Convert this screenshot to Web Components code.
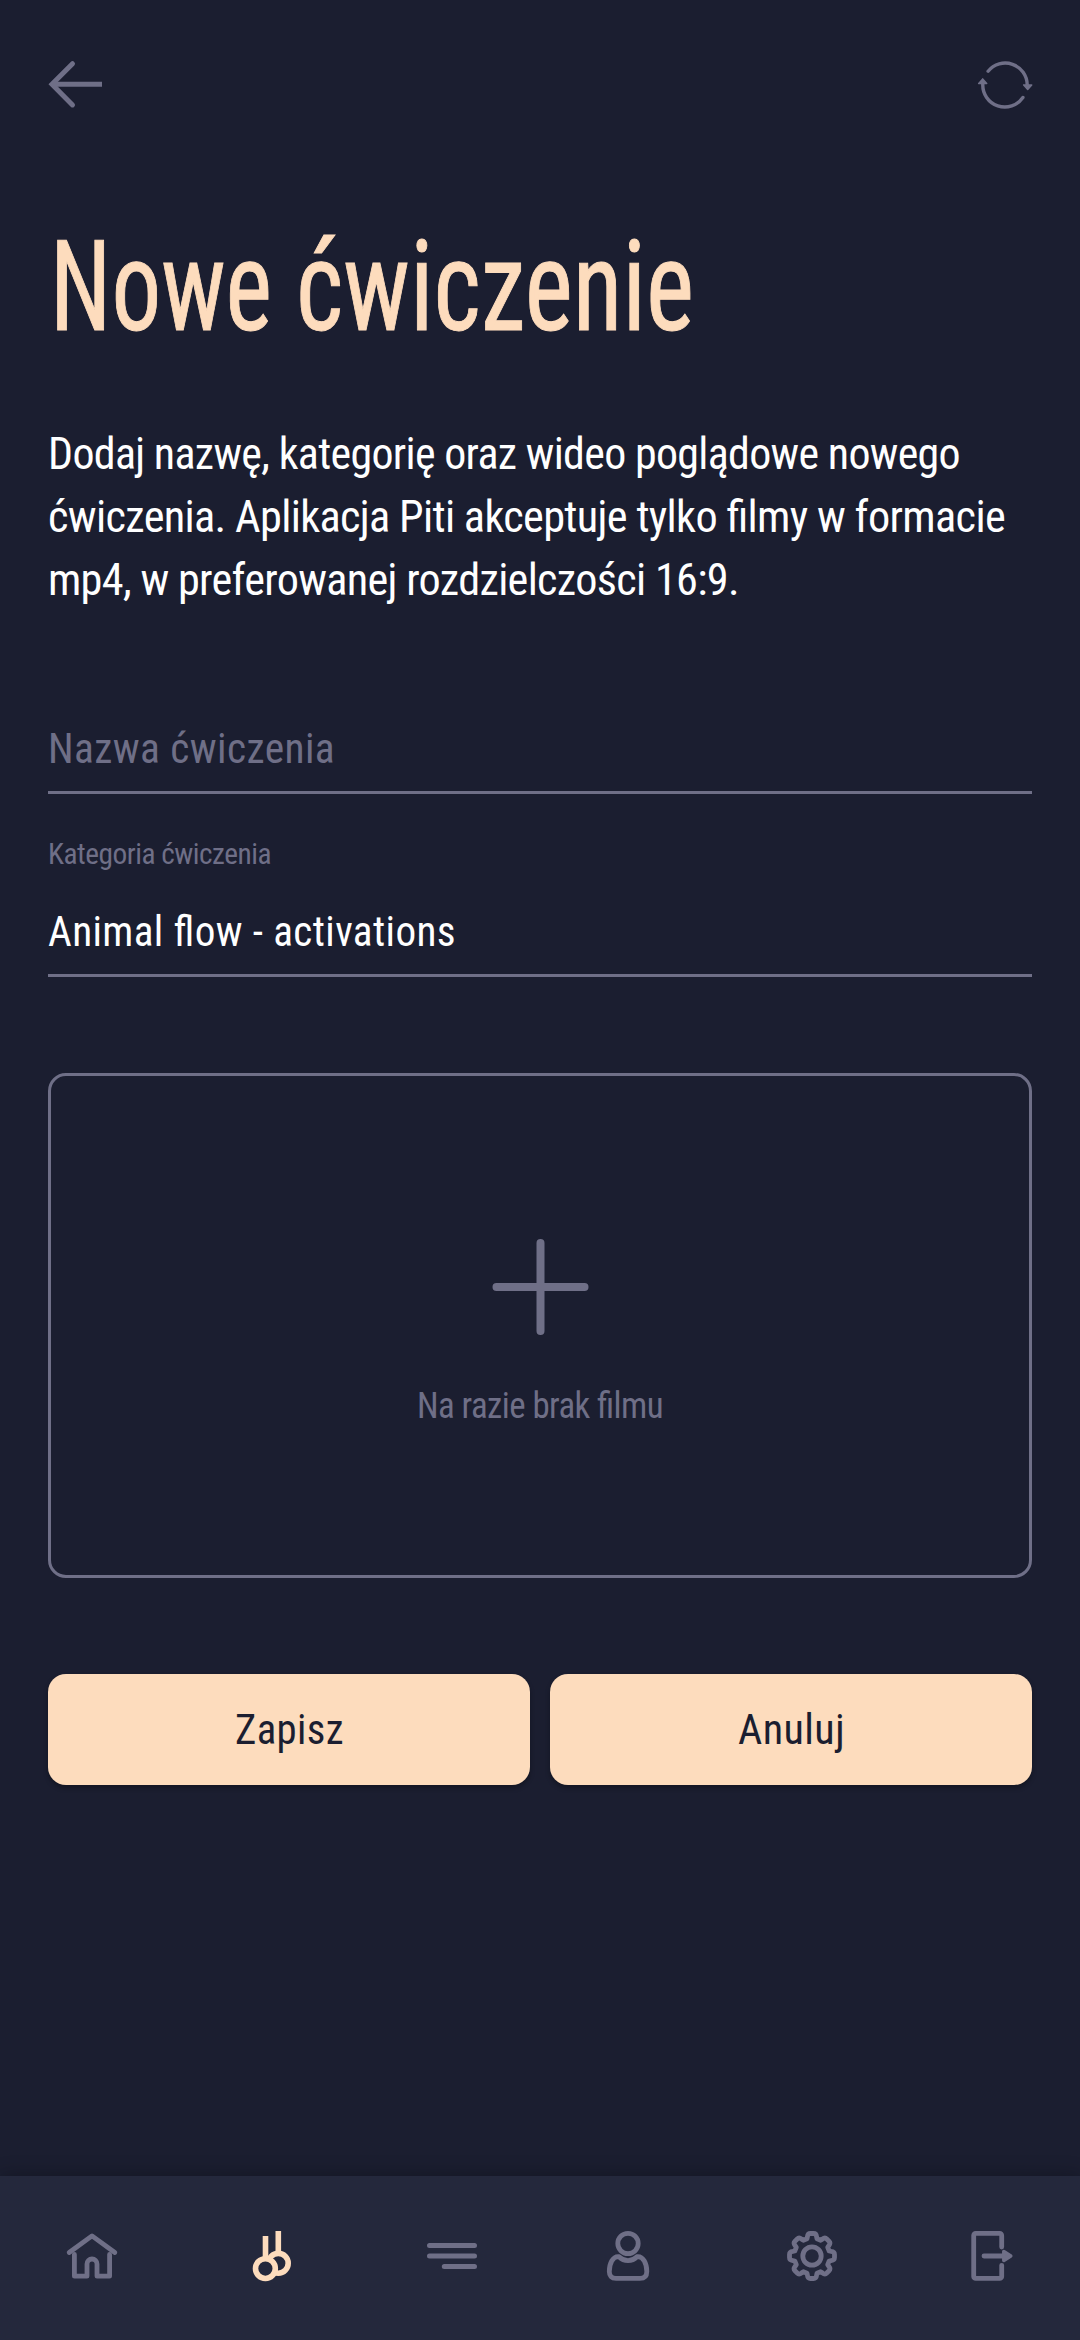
<!DOCTYPE html>
<html lang="pl">
<head>
<meta charset="utf-8">
<title>Nowe ćwiczenie</title>
<style>
html,body{margin:0;background:#1b1e30}
body{font-family:"Roboto Condensed",Roboto,sans-serif;font-stretch:75%;color:#fff}
</style>
</head>
<body>
<exercise-page></exercise-page>
<script>
function define(name, html, connected){
  customElements.define(name, class extends HTMLElement{
    constructor(){
      super();
      const t=document.createElement('template');
      t.innerHTML=html;
      this.attachShadow({mode:'open'}).appendChild(t.content.cloneNode(true));
    }
    connectedCallback(){ if(connected) connected.call(this); }
  });
}

// One tooth of the gear, repeated eight times round the centre
function gearPath(){
  const tooth=[[-5,-17.2],[-4.6,-19.2],[-4.2,-22.5],[-1.6,-22.5],[1.6,-22.5],[4.2,-22.5],[4.6,-19.2],[5,-17.2]];
  let d='';
  for(let k=0;k<8;k++){
    const a=k*Math.PI/4,c=Math.cos(a),s=Math.sin(a);
    const p=tooth.map(([x,y])=>(25+x*c-y*s).toFixed(2)+' '+(25+x*s+y*c).toFixed(2));
    d+=(k?'L':'M')+p[0]+'L'+p[1]+'Q'+p[2]+' '+p[3]+'L'+p[4]+'Q'+p[5]+' '+p[6]+'L'+p[7];
  }
  return d+'Z';
}
const ICONS={
  back:[54,5,'<path d="M24.5 6.7 4 27.3l20.500 20.600" stroke-linejoin="miter"/><path d="M4 27.300H54" stroke-linecap="butt"/>'],
  refresh:[54,3.4,'<path d="M10.100 14.200A22 22 0 0 1 49.200 28"/><path d="M44.900 40.500A22 22 0 0 1 4.800 27"/><path class="f" d="M45.700 27.900h8l-4 4.500zM.700 26.400h8l-4-4.500z" stroke-width="1.500"/>'],
  home:[50,4.800,'<path d="M2.200 21.500 25 4.900l22.800 16.600"/><path d="M7.400 23.500V45.200H20V33a5 5 0 0 1 10 0V45.200H42.600V23.500"/>'],
  rings:[50,5.600,'<circle cx="31.300" cy="32.300" r="9.900"/><path d="M31.300 0V21" stroke-linecap="butt"/><circle cx="18.400" cy="37.600" r="9.900" fill="#24283c"/><path d="M18.500 5V27" stroke-linecap="butt"/>'],
  menu:[50,5,'<path d="M2.500 14.500h45M2.500 25h45M17.300 35.500H47.500"/>'],
  user:[50,4.800,'<circle cx="25" cy="12.500" r="10.200"/><path d="M16 25.700C21 30.800 29 30.800 34 25.700 40.500 25 43.800 33 43.800 40.500 43.800 45 41.500 47.400 37 47.400H13C8.500 47.400 6.300 45 6.300 40.500 6.300 33 9.500 25 16 25.700Z"/>'],
  gear:[50,4.800,'<circle cx="25" cy="25" r="9.200"/><path d="'+gearPath()+'"/>'],
  exit:[50,4.800,'<path d="M34.700 16V4.400a2 2 0 0 0-2-2H8.700a2 2 0 0 0-2 2V45.400a2 2 0 0 0 2 2H32.700a2 2 0 0 0 2-2V34.300M17 25H38"/><path class="f" d="M36.800 20.500v9l7-4.500z" stroke-width="3.500"/>'],
  plus:[98,8,'<path d="M49.500 5V93M5.500 49H93.500"/>']
};
define('line-icon','<style>:host{display:block;flex:none}svg{display:block;overflow:visible;fill:none;stroke:currentColor;stroke-linecap:round;stroke-linejoin:round}.f{fill:currentColor}</style><svg></svg>',function(){
  const [n,w,body]=ICONS[this.getAttribute('name')],s=this.shadowRoot.querySelector('svg');
  s.setAttribute('viewBox','0 0 '+n+' '+n);s.setAttribute('width',n);s.setAttribute('height',n);
  s.setAttribute('stroke-width',w);s.innerHTML=body;
});

// A single line of text condensed horizontally to the width given
define('fit-text','<style>:host{display:block;white-space:nowrap;flex:none;font-feature-settings:"liga" 1}span{display:inline-block;transform-origin:0 50%}</style><span><slot></slot></span>',function(){
  const w=+this.getAttribute('w'),s=this.shadowRoot.querySelector('span');
  this.style.width=w+'px';
  s.style.transform='scaleX('+w/s.getBoundingClientRect().width+')';
});

define('top-bar','<style>:host{display:flex;justify-content:space-between;padding:57px 48px 0;height:56px;color:#6f6f87}</style><line-icon name="back"></line-icon><line-icon name="refresh"></line-icon>');

define('page-title','<style>:host{display:flex;gap:24px;padding-left:2px;color:#fddcbd;font-size:126px;line-height:150px;-webkit-text-stroke:1px #fddcbd}</style><slot></slot>');

define('form-field','<style>:host{display:block;border-bottom:3px solid #6f6f87;font-size:42px;line-height:50px;letter-spacing:.4px}.l{color:#6f6f87;font-size:30px;line-height:36px;letter-spacing:-.5px;padding-bottom:35px}:host([placeholder]){color:#6f6f87}:host([placeholder]) .l{display:none}.v{padding-bottom:17px}</style><div class="l"><slot name="label"></slot></div><div class="v"><slot></slot></div>');

define('video-drop','<style>:host{display:flex;flex-direction:column;align-items:center;box-sizing:border-box;height:505px;border:3px solid #6f6f87;border-radius:18px;color:#6f6f87;font-size:36px;line-height:44px;letter-spacing:-.6px;padding-top:162px;gap:48px}</style><line-icon name="plus"></line-icon><slot></slot>');

define('app-button','<style>:host{display:flex;flex:1;justify-content:center;align-items:center;height:111px;border-radius:18px;background:#fddcbd;color:#1b1e30;font-size:42px;line-height:50px;letter-spacing:.4px;box-shadow:0 3px 5px rgba(0,0,0,.3)}</style><slot></slot>');

define('bottom-nav','<style>:host{display:flex;box-sizing:border-box;height:164px;padding:55px 0 0 1.700px;background:#24283c;color:#6f6f87;box-shadow:0 0 18px rgba(0,0,0,.3)}div{flex:0 0 180px;display:flex;justify-content:center}.on{color:#fddcbd}.u line-icon{margin-right:8px}</style><div><line-icon name="home"></line-icon></div><div class="on"><line-icon name="rings"></line-icon></div><div><line-icon name="menu"></line-icon></div><div class="u"><line-icon name="user"></line-icon></div><div><line-icon name="gear"></line-icon></div><div><line-icon name="exit"></line-icon></div>');

define('exercise-page',`<style>
:host{display:flex;flex-direction:column;width:1080px;height:2340px;background:#1b1e30;overflow:hidden}
main{flex:1;padding:99px 48px 0;display:flex;flex-direction:column}
.intro{margin-top:60px;font-size:45px;line-height:63px;letter-spacing:-.7px}
.name{margin-top:113px}.cat{margin-top:42px}
video-drop{margin-top:96px}
.row{display:flex;gap:20px;margin-top:96px}
</style>
<top-bar></top-bar>
<main>
<page-title><fit-text w="222">Nowe</fit-text><fit-text w="398">ćwiczenie</fit-text></page-title>
<div class="intro"><fit-text w="912">Dodaj nazwę, kategorię oraz wideo poglądowe nowego</fit-text><fit-text w="957">ćwiczenia. Aplikacja Piti akceptuje tylko filmy w formacie</fit-text><fit-text w="691">mp4, w preferowanej rozdzielczości 16:9.</fit-text></div>
<form-field class="name" placeholder><fit-text w="287">Nazwa ćwiczenia</fit-text></form-field>
<form-field class="cat"><fit-text slot="label" w="223">Kategoria ćwiczenia</fit-text><fit-text w="408">Animal flow - activations</fit-text></form-field>
<video-drop><fit-text w="246">Na razie brak filmu</fit-text></video-drop>
<div class="row"><app-button><fit-text w="109">Zapisz</fit-text></app-button><app-button><fit-text w="107">Anuluj</fit-text></app-button></div>
</main>
<bottom-nav></bottom-nav>`);
</script>
</body>
</html>
